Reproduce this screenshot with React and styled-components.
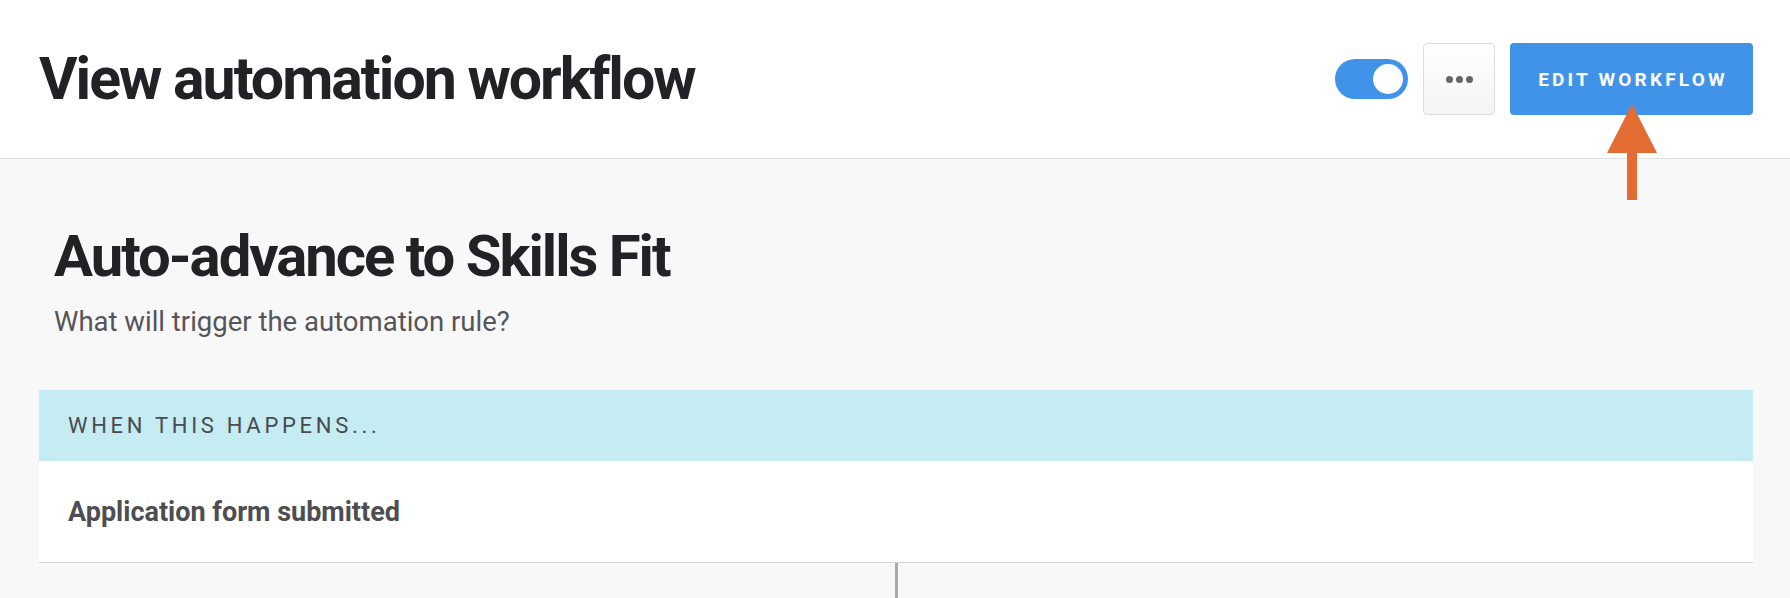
import React from "react";
import styled, { createGlobalStyle } from "styled-components";

const GlobalStyle = createGlobalStyle`
  html, body {
    margin: 0;
    padding: 0;
    background: #f8f8f8;
    overflow: hidden;
  }
  body {
    font-family: Roboto, "Liberation Sans", Arial, sans-serif;
    color: #222226;
  }
`;

const Page = styled.div`
  width: 1790px;
  height: 598px;
  display: flex;
  flex-direction: column;
  background: #f8f8f8;
  overflow: hidden;
`;

const Header = styled.header`
  height: 158px;
  flex-shrink: 0;
  display: flex;
  align-items: center;
  justify-content: space-between;
  padding: 0 37px 0 39px;
  background: #ffffff;
  border-bottom: 1px solid #e1e1e1;
`;

const PageTitle = styled.h1`
  margin: 0;
  font-size: 59px;
  font-weight: 700;
  letter-spacing: -2px;
  line-height: 1.2;
  color: #222226;
`;

const Actions = styled.div`
  display: flex;
  align-items: center;
  gap: 15px;
`;

const Toggle = styled.div`
  width: 73px;
  height: 40px;
  border-radius: 20px;
  background: #4193ea;
  display: flex;
  align-items: center;
  justify-content: ${(p) => (p.$on ? "flex-end" : "flex-start")};
  padding: 0 5px;
  box-sizing: border-box;
`;

const Knob = styled.span`
  width: 30px;
  height: 30px;
  border-radius: 50%;
  background: #ffffff;
`;

const MoreButton = styled.button`
  width: 72px;
  height: 72px;
  border: 1px solid #dcdcdc;
  border-radius: 4px;
  background: linear-gradient(#ffffff, #f4f4f4);
  display: flex;
  align-items: center;
  justify-content: center;
  gap: 3px;
  padding: 0;
  cursor: pointer;
`;

const Dot = styled.span`
  width: 7px;
  height: 7px;
  border-radius: 50%;
  background: #666666;
`;

const EditWrap = styled.div`
  position: relative;
`;

const PrimaryButton = styled.button`
  width: 243px;
  height: 72px;
  border: none;
  border-radius: 4px;
  background: #4193ea;
  color: #ffffff;
  font-family: Roboto, "Liberation Sans", Arial, sans-serif;
  font-size: 19px;
  font-weight: 700;
  letter-spacing: 3.2px;
  padding: 0 0 0 3px;
  cursor: pointer;
`;

const Pointer = styled.svg`
  position: absolute;
  left: 50%;
  top: 61px;
  transform: translateX(-50%);
`;

const Content = styled.main`
  flex: 1;
  padding: 61px 37px 0 39px;
  display: flex;
  flex-direction: column;
`;

const Intro = styled.div`
  padding-left: 15px;
  margin-bottom: 51px;
`;

const RuleTitle = styled.h2`
  margin: 0 0 11px;
  font-size: 58px;
  font-weight: 700;
  letter-spacing: -2px;
  line-height: 1.25;
  color: #222226;
`;

const RuleHint = styled.p`
  margin: 0;
  font-size: 27.5px;
  line-height: 1.3;
  color: #55555a;
`;

const Section = styled.section`
  display: flex;
  flex-direction: column;
`;

const SectionBand = styled.div`
  height: 71px;
  display: flex;
  align-items: center;
  padding: 0 29px;
  background: #c4ecf2;
  font-size: 22px;
  letter-spacing: 3.7px;
  color: #4a4a50;
`;

const SectionRow = styled.div`
  height: 101px;
  display: flex;
  align-items: center;
  padding: 0 29px;
  background: #ffffff;
  border-bottom: 1px solid #d6d6d6;
  font-size: 27px;
  font-weight: 700;
  color: #4d4d52;
`;

const Connector = styled.div`
  align-self: center;
  width: 3px;
  height: 80px;
  flex-shrink: 0;
  background: #a9a9a9;
`;

export default function App() {
  return (
    <Page>
      <GlobalStyle />
      <Header>
        <PageTitle>View automation workflow</PageTitle>
        <Actions>
          <Toggle $on>
            <Knob />
          </Toggle>
          <MoreButton aria-label="More">
            <Dot />
            <Dot />
            <Dot />
          </MoreButton>
          <EditWrap>
            <PrimaryButton>EDIT WORKFLOW</PrimaryButton>
            <Pointer width="50" height="96" viewBox="0 0 50 96">
              <polygon points="25,0 50,49 0,49" fill="#e36c32" />
              <rect x="20" y="48" width="10" height="48" fill="#e36c32" />
            </Pointer>
          </EditWrap>
        </Actions>
      </Header>
      <Content>
        <Intro>
          <RuleTitle>Auto-advance to Skills Fit</RuleTitle>
          <RuleHint>What will trigger the automation rule?</RuleHint>
        </Intro>
        <Section>
          <SectionBand>WHEN THIS HAPPENS...</SectionBand>
          <SectionRow>Application form submitted</SectionRow>
        </Section>
        <Connector />
      </Content>
    </Page>
  );
}
